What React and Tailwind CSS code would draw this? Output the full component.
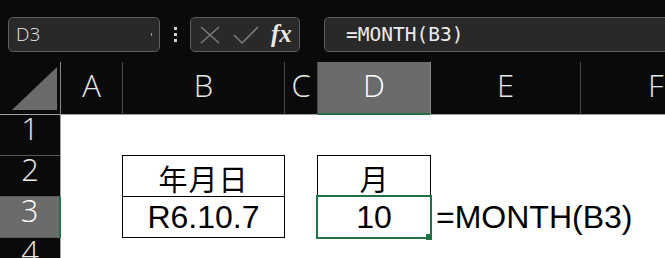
import React from "react";

const HDR = "flex justify-center items-start text-[31px] font-light leading-[47px] text-[#e8e8e8]";
const ROWH = "flex justify-center items-start text-[31px] font-light leading-[25px] pt-[1px] text-[#e8e8e8] border-r border-b border-[#5a5a5a]";

export default function App() {
  const uiFont = { fontFamily: '"Open Sans", "Noto Sans", sans-serif' };
  const cellFont = { fontFamily: '"Liberation Sans", "Noto Sans CJK JP", sans-serif' };
  const cjkFont = { fontFamily: '"Noto Sans CJK JP", sans-serif' };
  return (
    <div className="w-[665px] h-[258px] overflow-hidden bg-[#0a0a0a]" style={uiFont}>
      {/* Formula bar */}
      <div className="h-[62px] flex items-start pt-[17px] pl-[8px]">
        <div className="w-[152px] h-[35px] rounded-[5px] border border-[#5c5c5c] bg-[#292929] flex items-center pl-[7px] pr-[7px]">
          <span className="text-[19px] font-light text-[#e8e8e8] leading-none">D3</span>
          <span className="ml-auto w-[1px] h-[3px] bg-[#9a9a9a]"></span>
        </div>
        <div className="w-[30px] h-[35px] flex flex-col items-center justify-center gap-[3px]">
          <span className="w-[3px] h-[3px] bg-[#d0d0d0]"></span>
          <span className="w-[3px] h-[3px] bg-[#d0d0d0]"></span>
          <span className="w-[3px] h-[3px] bg-[#d0d0d0]"></span>
        </div>
        <div className="w-[110px] h-[35px] rounded-[5px] border border-[#5c5c5c] bg-[#292929] flex items-center pl-[9px]">
          <svg width="20" height="18" viewBox="0 0 20 18">
            <path d="M1 1 L19 17 M19 1 L1 17" stroke="#7a7a7a" strokeWidth="1.6" fill="none" />
          </svg>
          <svg width="26" height="18" viewBox="0 0 26 18" className="ml-[13px]">
            <path d="M1 9 L9 17 L25 1" stroke="#7a7a7a" strokeWidth="1.6" fill="none" />
          </svg>
          <span
            className="ml-[12px] text-[25px] italic font-bold text-[#e8e8e8] leading-none -mt-[3px]"
            style={{ fontFamily: '"Liberation Serif", "DejaVu Serif", serif' }}
          >
            fx
          </span>
        </div>
        <div className="ml-[24px] flex-1 -mr-[20px] h-[35px] rounded-[5px] border border-[#5c5c5c] bg-[#292929] flex items-center pl-[21px]">
          <span
            className="text-[19.5px] text-[#ececec] leading-none"
            style={{ fontFamily: '"DejaVu Sans Mono", "Liberation Mono", monospace' }}
          >
            =MONTH(B3)
          </span>
        </div>
      </div>

      {/* Grid */}
      <div className="grid grid-cols-[61px_62px_162px_33px_113px_150px_1fr] grid-rows-[53px_41px_41px_41px_41px]">
        {/* Header row */}
        <div className="relative border-r border-b border-r-[#8a8a8a] border-b-[#a0a0a0]">
          <svg className="absolute left-[12px] top-[5px]" width="46" height="44" viewBox="0 0 46 44">
            <polygon points="0,43 45,0 45,43" fill="#6b6b6b" />
          </svg>
        </div>
        <div className={HDR + " border-r border-b border-r-[#4a4a4a] border-b-[#a0a0a0]"}>A</div>
        <div className={HDR + " border-r border-b border-r-[#4a4a4a] border-b-[#a0a0a0]"}>B</div>
        <div className={HDR + " border-r border-b border-r-[#4a4a4a] border-b-[#a0a0a0]"}>C</div>
        <div className={HDR + " relative bg-[#6b6b6b] text-white border-r border-b border-r-[#8a8a8a] border-b-[#a0a0a0]"}>
          D
          <span className="absolute left-0 right-0 -bottom-[1px] h-[2px] bg-[#217346]"></span>
        </div>
        <div className={HDR + " border-r border-b border-r-[#4a4a4a] border-b-[#a0a0a0]"}>E</div>
        <div className={HDR + " border-b border-b-[#a0a0a0] justify-start pl-[67px]"}>F</div>

        {/* Row 1 */}
        <div className={ROWH + " border-r-[#a0a0a0]"}>1</div>
        <div className="col-span-6 bg-white"></div>

        {/* Row 2 */}
        <div className={ROWH + " border-r-[#a0a0a0]"}>2</div>
        <div className="bg-white"></div>
        <div className="bg-white -ml-px -mt-px border border-black flex items-end justify-center" style={cjkFont}>
          <span className="text-[29px] leading-[36px] text-black tracking-[1px]">年月日</span>
        </div>
        <div className="bg-white"></div>
        <div className="bg-white -ml-px -mt-px border border-black flex items-end justify-center" style={cjkFont}>
          <span className="text-[29px] leading-[36px] text-black">月</span>
        </div>
        <div className="col-span-2 bg-white"></div>

        {/* Row 3 */}
        <div className={ROWH + " relative bg-[#6b6b6b] text-white border-r-[#217346] border-r-2"}>3</div>
        <div className="bg-white"></div>
        <div className="bg-white -ml-px -mt-px border border-black flex items-center justify-center" style={cellFont}>
          <span className="text-[32px] leading-[41px] text-black">R6.10.7</span>
        </div>
        <div className="bg-white"></div>
        <div className="relative bg-white -ml-px -mt-px border border-black flex items-center justify-center" style={cellFont}>
          <span className="text-[32px] leading-[41px] text-black">10</span>
          <span className="absolute -inset-[2px] border-2 border-[#217346]"></span>
          <span className="absolute -right-[2px] -bottom-[3px] w-[6px] h-[6px] bg-[#217346]"></span>
        </div>
        <div className="col-span-2 bg-white flex items-center pl-[5px] overflow-visible whitespace-nowrap" style={cellFont}>
          <span className="text-[32px] leading-[41px] text-black">=MONTH(B3)</span>
        </div>

        {/* Row 4 */}
        <div className={ROWH + " border-r-[#a0a0a0]"}>4</div>
        <div className="col-span-6 bg-white"></div>
      </div>
    </div>
  );
}
